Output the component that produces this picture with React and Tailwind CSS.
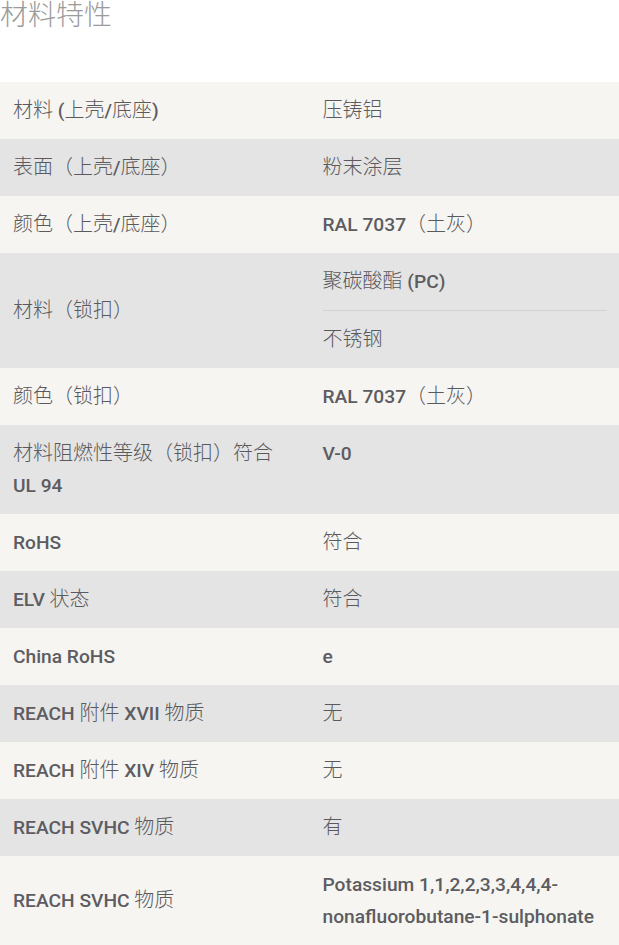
import React from 'react';

const CJK = /([\u2e80-\u9fff\u3000-\u303f\uff00-\uffef]+)/;

// latin runs are medium weight, CJK runs stay thin and a touch larger
const Txt = ({ text }) =>
  text.split(CJK).map((part, i) =>
    part === '' ? null : i % 2 === 1 ? (
      <span key={i} className="text-[20px] leading-[20px] font-light text-[#5a5a5e]">{part}</span>
    ) : (
      <span key={i} className="text-[19.2px] leading-[20px] font-medium text-[#5c5c61]">{part}</span>
    )
  );

const rows = [
  { label: '材料 (上壳/底座)', values: ['压铸铝'] },
  { label: '表面（上壳/底座）', values: ['粉末涂层'] },
  { label: '颜色（上壳/底座）', values: ['RAL 7037（土灰）'] },
  { label: '材料（锁扣）', values: ['聚碳酸酯 (PC)', '不锈钢'] },
  { label: '颜色（锁扣）', values: ['RAL 7037（土灰）'] },
  { label: '材料阻燃性等级（锁扣）符合 UL\u00a094', values: ['V-0'] },
  { label: 'RoHS', values: ['符合'] },
  { label: 'ELV 状态', values: ['符合'] },
  { label: 'China RoHS', values: ['e'] },
  { label: 'REACH 附件 XVII 物质', values: ['无'] },
  { label: 'REACH 附件 XIV 物质', values: ['无'] },
  { label: 'REACH SVHC 物质', values: ['有'] },
  { label: 'REACH SVHC 物质', values: ['Potassium 1,1,2,2,3,3,4,4,4-nonafluorobutane-1-sulphonate'] },
];

const App = () => {
  return (
    <div
      className="w-[619px] bg-white"
      style={{ fontFamily: "Roboto, 'Noto Sans CJK SC', sans-serif" }}
    >
      {/* Title */}
      <h2 className="text-[28px] leading-8 font-light text-[#9b9b9b] mb-[50px]">材料特性</h2>

      {/* Table */}
      <div className="text-[19px] leading-8">
        {rows.map((row, i) => (
          <div
            key={i}
            className={`grid grid-cols-2 ${i % 2 === 0 ? 'bg-[#f6f5f2]' : 'bg-[#e4e4e4]'}`}
          >
            <div className="self-center pl-[13px] pr-3 py-[12.5px]">
              <Txt text={row.label} />
            </div>
            <div className="pl-[13px] pr-3">
              {row.values.map((v, j) => (
                <div key={j} className={`py-[12.5px] ${j > 0 ? 'border-t border-[#d2d2d2]' : ''}`}>
                  <Txt text={v} />
                </div>
              ))}
            </div>
          </div>
        ))}
      </div>
    </div>
  );
};

export default App;
